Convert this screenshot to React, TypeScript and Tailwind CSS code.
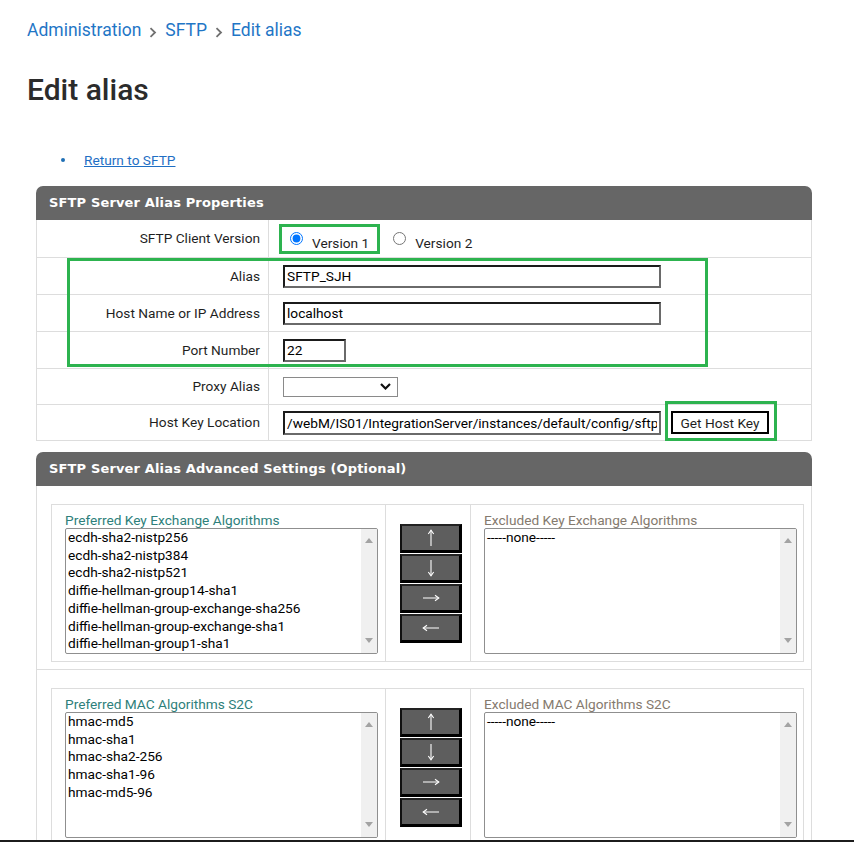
import React from "react";

const KEX = [
  "ecdh-sha2-nistp256",
  "ecdh-sha2-nistp384",
  "ecdh-sha2-nistp521",
  "diffie-hellman-group14-sha1",
  "diffie-hellman-group-exchange-sha256",
  "diffie-hellman-group-exchange-sha1",
  "diffie-hellman-group1-sha1",
];

const MAC = ["hmac-md5", "hmac-sha1", "hmac-sha2-256", "hmac-sha1-96", "hmac-md5-96"];

const inputCls =
  "h-[23px] border-2 border-t-[#1b1b1b] border-l-[#1b1b1b] border-r-[#6a6a6a] border-b-[#6a6a6a] bg-white px-[2px] text-[13.7px] text-black outline-none font-['Roboto',sans-serif]";

function Chevron() {
  return (
    <svg width="8" height="11" viewBox="0 0 8 11" fill="none" aria-hidden className="mt-[5px]">
      <path d="M1.5 1.2L6 5.5L1.5 9.8" stroke="#707070" strokeWidth="1.8" />
    </svg>
  );
}

function PanelHeader({ title }: { title: string }) {
  return (
    <div className="flex h-[34px] items-center rounded-t-[7px] bg-[#666666] pl-[13px] font-['DejaVu_Sans',sans-serif] text-[13px] font-bold tracking-[0.15px] text-white">
      {title}
    </div>
  );
}

function Row({
  label,
  h = "h-[37px]",
  children,
}: {
  label: string;
  h?: string;
  children: React.ReactNode;
}) {
  return (
    <div className={`flex ${h} border-b border-[#dddddd]`}>
      <div className="flex w-[232px] items-center justify-end border-r border-[#dddddd] pr-[8px] text-[13.7px] text-[#1f1f1f]">
        {label}
      </div>
      <div className="flex flex-1 items-center pl-[14px]">{children}</div>
    </div>
  );
}

function ListBox({ items }: { items: string[] }) {
  return (
    <div className="flex h-[126px] w-[313px] overflow-hidden rounded-[2px] border border-[#8f8f8f] bg-white">
      <div className="flex-1 pl-[2px] text-[13.7px] leading-[17.7px] text-black">
        {items.map((it) => (
          <div key={it} className="whitespace-nowrap">
            {it}
          </div>
        ))}
      </div>
      <div className="flex w-[16px] flex-col items-center justify-between bg-[#f0f0f0] pb-[10px] pt-[9px]">
        <svg width="8" height="5" viewBox="0 0 8 5" aria-hidden>
          <path d="M0 5L4 0L8 5Z" fill="#a3a3a3" />
        </svg>
        <svg width="8" height="5" viewBox="0 0 8 5" aria-hidden>
          <path d="M0 0L4 5L8 0Z" fill="#a3a3a3" />
        </svg>
      </div>
    </div>
  );
}

// thin arrow glyphs, drawn pointing up and rotated per button
function Arrow({ dir }: { dir: "up" | "down" | "right" | "left" }) {
  const rot = { up: "", down: "rotate-180", right: "rotate-90", left: "-rotate-90" }[dir];
  return (
    <svg width="8" height="18" viewBox="0 0 8 18" fill="none" aria-hidden className={rot}>
      <path d="M4 1.5V17" stroke="#ffffff" strokeWidth="1.1" />
      <path d="M1.3 5L4 1.2L6.7 5" stroke="#ffffff" strokeWidth="1.1" />
    </svg>
  );
}

function MoveButtons() {
  const dirs: ("up" | "down" | "right" | "left")[] = ["up", "down", "right", "left"];
  return (
    <div className="flex flex-col gap-px">
      {dirs.map((d) => (
        <div
          key={d}
          className="flex h-[29px] w-[62px] items-center justify-center border-l-2 border-t-2 border-b-[3px] border-r-[3px] border-l-[#111] border-t-[#222] border-b-black border-r-black bg-[#5e5e5e]"
        >
          <Arrow dir={d} />
        </div>
      ))}
    </div>
  );
}

function AlgoRow({ left, right, items }: { left: string; right: string; items: string[] }) {
  return (
    <div className="border-b border-[#dddddd] pb-[7px] pl-[14px] pr-[7px] pt-[18px]">
      <div className="grid grid-cols-[333px_85px_1fr] border border-[#dddddd]">
        <div className="pb-[7px] pl-[13px] pt-[7px]">
          <div className="text-[13.7px] leading-[16px] text-[#2e7f7b]">{left}</div>
          <ListBox items={items} />
        </div>
        <div className="flex items-center border-l border-[#dddddd] pl-[14px]">
          <MoveButtons />
        </div>
        <div className="border-l border-[#dddddd] pb-[7px] pl-[13px] pt-[7px]">
          <div className="text-[13.7px] leading-[16px] text-[#857a6e]">{right}</div>
          <ListBox items={["-----none-----"]} />
        </div>
      </div>
    </div>
  );
}

export default function App() {
  return (
    <div className="min-h-screen bg-white font-['Roboto',sans-serif] text-[#222]">
      {/* breadcrumb + title */}
      <div className="pl-[27px] pt-[18px]">
        <div className="flex h-[24px] items-center gap-[8px] text-[17.5px] leading-[24px] text-[#1f76c6]">
          <span>Administration</span>
          <Chevron />
          <span>SFTP</span>
          <Chevron />
          <span>Edit alias</span>
        </div>
        <h1 className="mt-[30px] text-[30px] font-medium leading-[36px] text-[#2b2b2b]">Edit alias</h1>
      </div>

      <div className="mt-[42px] flex h-[20px] items-center pl-[61px] text-[13.7px] leading-[20px]">
        <span className="h-[4px] w-[4px] rounded-full bg-[#1f6fb5]" />
        <a href="#" className="ml-[19px] text-[#1f6fc4] underline">
          Return to SFTP
        </a>
      </div>

      {/* properties panel */}
      <div className="relative ml-[36px] mt-[16px] w-[776px]">
        <PanelHeader title="SFTP Server Alias Properties" />
        <div className="border-x border-[#dddddd]">
          <Row label="SFTP Client Version" h="h-[38px]">
            <div className="flex items-center pl-[7px]">
              <input type="radio" name="ver" defaultChecked className="m-0 h-[13px] w-[13px]" />
              <span className="ml-[9px] mt-[9px] text-[13.7px] text-[#1f1f1f]">Version 1</span>
              <input type="radio" name="ver" className="m-0 ml-[24px] h-[13px] w-[13px]" />
              <span className="ml-[9px] mt-[9px] text-[13.7px] text-[#1f1f1f]">Version 2</span>
            </div>
          </Row>
          <Row label="Alias">
            <input className={`${inputCls} w-[378px]`} defaultValue="SFTP_SJH" />
          </Row>
          <Row label="Host Name or IP Address">
            <input className={`${inputCls} w-[378px]`} defaultValue="localhost" />
          </Row>
          <Row label="Port Number">
            <input className={`${inputCls} h-[22px] w-[63px]`} defaultValue="22" />
          </Row>
          <Row label="Proxy Alias" h="h-[36px]">
            <div className="flex h-[20px] w-[115px] items-center justify-end border border-[#8a8a8a] bg-white pr-[6px]">
              <svg width="11" height="7" viewBox="0 0 11 7" fill="none" aria-hidden>
                <path d="M1 1L5.5 5.5L10 1" stroke="#111" strokeWidth="2.2" />
              </svg>
            </div>
          </Row>
          <Row label="Host Key Location" h="h-[36px]">
            <input
              className={`${inputCls} h-[24px] w-[378px]`}
              readOnly
              value="/webM/IS01/IntegrationServer/instances/default/config/sftp/known_hosts"
            />
            <button className="ml-[10px] h-[23px] w-[98px] border-2 border-black bg-white text-[13.7px] text-[#1f1f1f]">
              Get Host Key
            </button>
          </Row>
        </div>

        {/* highlight annotations */}
        <div className="pointer-events-none absolute left-[243px] top-[38px] h-[30px] w-[101px] border-[3px] border-[#2db34f]" />
        <div className="pointer-events-none absolute left-[31px] top-[72px] h-[109px] w-[641px] border-[3px] border-[#2db34f]" />
        <div className="pointer-events-none absolute left-[629px] top-[215px] h-[40px] w-[112px] border-[3px] border-[#2db34f]" />
      </div>

      {/* advanced panel */}
      <div className="ml-[36px] mt-[11px] w-[776px]">
        <PanelHeader title="SFTP Server Alias Advanced Settings (Optional)" />
        <div className="border-x border-[#dddddd]">
          <AlgoRow
            left="Preferred Key Exchange Algorithms"
            right="Excluded Key Exchange Algorithms"
            items={KEX}
          />
          <AlgoRow left="Preferred MAC Algorithms S2C" right="Excluded MAC Algorithms S2C" items={MAC} />
        </div>
      </div>

      <div className="fixed inset-x-0 bottom-0 h-[2px] bg-[#1c1c1c]" />
    </div>
  );
}
